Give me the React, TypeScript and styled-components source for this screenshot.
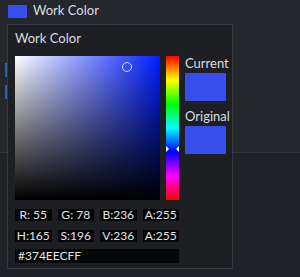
import { createGlobalStyle, styled } from "styled-components";

const GlobalStyle = createGlobalStyle`
  html, body {
    margin: 0;
    padding: 0;
    background: #1f2226;
  }
  body {
    font-family: Lato, "Noto Sans", sans-serif;
    color: #dcdde0;
  }
`;

const hueColor = "#001eff";

const rgbaFields = ["R: 55", "G: 78", "B:236", "A:255"];
const hsvaFields = ["H:165", "S:196", "V:236", "A:255"];

export default function App() {
  return (
    <>
      <GlobalStyle />
      <Page>
        <Header>
          <Swatch />
          <Label>Work Color</Label>
        </Header>
        <BackPanel>
          <Peek />
          <Peek />
        </BackPanel>

        <Popup>
          <Title>Work Color</Title>
          <PickerRow>
            <SvSquare>
              <SvShade />
              <SvCursor />
            </SvSquare>
            <HueBar />
            <Previews>
              <PreviewLabel>Current</PreviewLabel>
              <PreviewBox />
              <PreviewLabel>Original</PreviewLabel>
              <PreviewBox />
            </Previews>
          </PickerRow>
          <FieldRow>
            {rgbaFields.map((f) => (
              <Field key={f}>{f}</Field>
            ))}
          </FieldRow>
          <FieldRow>
            {hsvaFields.map((f) => (
              <Field key={f}>{f}</Field>
            ))}
          </FieldRow>
          <HexField>#374EECFF</HexField>
        </Popup>
      </Page>
    </>
  );
}

const Page = styled.div`
  position: relative;
  width: 300px;
  height: 277px;
  overflow: hidden;
`;

const Header = styled.div`
  height: 22px;
  display: flex;
  align-items: center;
  gap: 6px;
  padding: 0 8px;
  background: #24272b;
`;

const Swatch = styled.div`
  width: 19px;
  height: 13px;
  background: #374eec;
  border-radius: 1px;
`;

const Label = styled.span`
  font-size: 13px;
  line-height: 13px;
  margin-top: -1px;
`;

const BackPanel = styled.div`
  height: 131px;
  background: #24272b;
  border-bottom: 1px solid #303337;
  display: flex;
  flex-direction: column;
  gap: 8px;
  padding: 41px 0 0 5px;
  box-sizing: border-box;
`;

const Peek = styled.div`
  width: 2px;
  height: 14px;
  background: #2f5fa8;
`;

const Popup = styled.div`
  position: absolute;
  left: 7px;
  top: 24px;
  width: 226px;
  height: 245px;
  box-sizing: border-box;
  background: #1d1f23;
  border: 1px solid #35383c;
  padding: 5px 0 0 7px;
  display: flex;
  flex-direction: column;
`;

const Title = styled.div`
  font-size: 13px;
  line-height: 16px;
  height: 26px;
`;

const PickerRow = styled.div`
  display: flex;
  align-items: flex-start;
  gap: 6px;

  & > * {
    flex-shrink: 0;
  }
`;

const SvSquare = styled.div`
  position: relative;
  width: 145px;
  height: 144px;
  background: linear-gradient(to right, #ffffff, ${hueColor});
`;

const SvShade = styled.div`
  position: absolute;
  inset: 0;
  background: linear-gradient(to bottom, rgba(0, 0, 0, 0), #000000);
`;

const SvCursor = styled.div`
  position: absolute;
  left: 107px;
  top: 6px;
  width: 10px;
  height: 10px;
  box-sizing: border-box;
  border: 1px solid #d8dcff;
  border-radius: 50%;
`;

const HueBar = styled.div`
  position: relative;
  width: 13px;
  height: 144px;
  background: linear-gradient(
    to bottom,
    #ff0000 0%,
    #ffff00 16.6%,
    #00ff00 33.3%,
    #00ffff 50%,
    #0000ff 66.6%,
    #ff00ff 83.3%,
    #ff0000 100%
  );

  &::before,
  &::after {
    content: "";
    position: absolute;
    top: 90px;
    width: 0;
    height: 0;
    border-top: 3px solid transparent;
    border-bottom: 3px solid transparent;
  }
  &::before {
    left: 0;
    border-left: 3px solid #ffffff;
  }
  &::after {
    right: 0;
    border-right: 3px solid #ffffff;
  }
`;

const Previews = styled.div`
  display: flex;
  flex-direction: column;
  padding-top: 1px;
`;

const PreviewLabel = styled.div`
  font-size: 13px;
  line-height: 13px;
  height: 16px;
`;

const PreviewBox = styled.div`
  width: 41px;
  height: 28px;
  margin-bottom: 9px;
  background: #374eec;
  border-radius: 1px;
`;

const FieldRow = styled.div`
  display: grid;
  grid-template-columns: repeat(4, 36.5px);
  column-gap: 6px;
  margin-top: 9px;
  height: 12px;

  & + & {
    margin-top: 9px;
  }
`;

const Field = styled.div`
  background: #060708;
  font-size: 12px;
  line-height: 12px;
  text-align: center;
  color: #e2e3e5;
`;

const HexField = styled.div`
  margin-top: 7px;
  width: 164px;
  height: 14px;
  background: #060708;
  font-size: 12px;
  line-height: 14px;
  padding-left: 3px;
  box-sizing: border-box;
  color: #e2e3e5;
`;
